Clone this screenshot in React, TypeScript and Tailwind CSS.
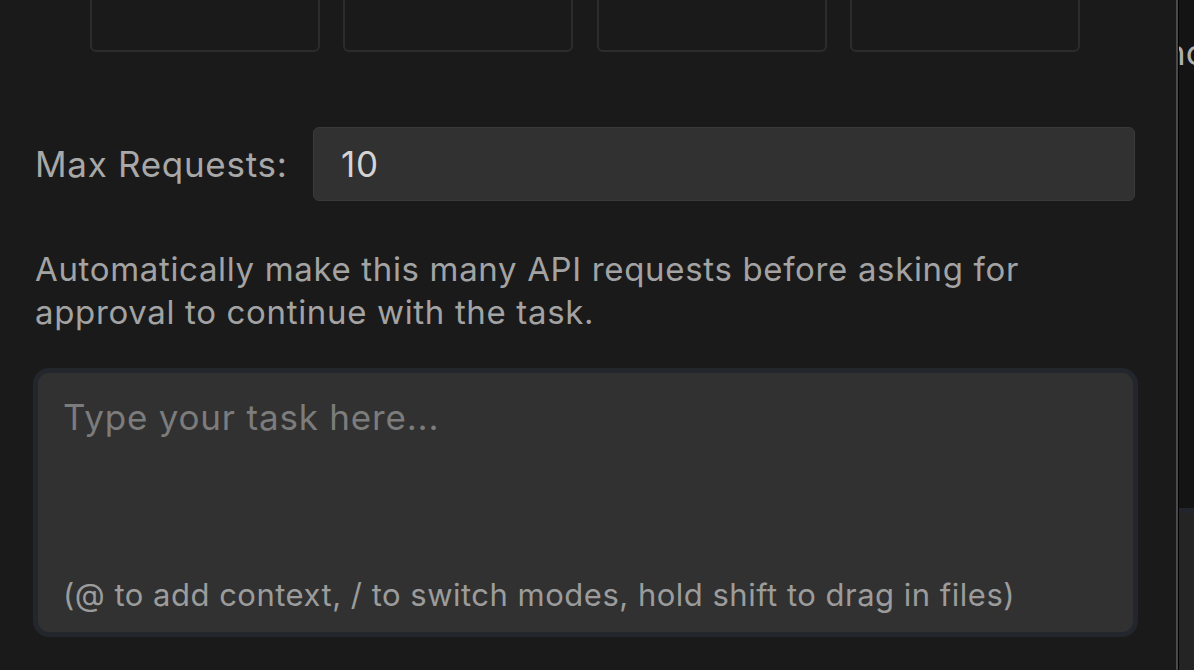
import React from 'react';

const font = { fontFamily: 'Inter, "Noto Sans", sans-serif' };

function ModeCard() {
  return <div className="h-[62px] w-[230px] rounded-md border-2 border-[#2c2c2c] bg-[#1a1a1a]" />;
}

export default function App() {
  return (
    <div className="flex h-[670px] w-[1194px] overflow-hidden bg-[#1a1a1a]" style={font}>
      {/* main panel */}
      <div className="flex w-[1176px] shrink-0 flex-col">
        <div className="-mt-[10px] flex gap-[23.3px] pl-[90px]">
          <ModeCard />
          <ModeCard />
          <ModeCard />
          <ModeCard />
        </div>

        <div className="mt-[75px] flex items-center pl-[35px] pr-[41px]">
          <span className="w-[278px] shrink-0 text-[35px] tracking-[0.02em] text-[#a8a8a8]">Max Requests:</span>
          <div className="flex h-[74px] flex-1 items-center rounded-md border border-[#3a3a3a] bg-[#313131] pl-[27px] text-[35px] tracking-[0.02em] text-[#d4d4d4]">
            10
          </div>
        </div>

        <p className="mt-[47px] pl-[35px] pr-[120px] text-[33px] leading-[43px] tracking-[0.02em] text-[#a3a3a3]">
          Automatically make this many API requests before asking for approval to continue with the task.
        </p>

        <div className="ml-[33px] mr-[38px] mt-[34px] flex h-[269px] flex-col justify-between rounded-2xl border-[5px] border-[#23262c] bg-[#313131] px-[25px] pb-[14px] pt-[18px]">
          <span className="text-[35px] tracking-[0.023em] text-[#7c7c7c]">Type your task here...</span>
          <span className="text-[31px] tracking-[0.016em] text-[#9c9c9c]">(@ to add context, / to switch modes, hold shift to drag in files)</span>
        </div>
      </div>

      {/* divider */}
      <div className="w-[2px] shrink-0 bg-[#4a4a4a]" />
      <div className="w-px shrink-0 bg-black" />

      {/* side panel */}
      <div className="flex flex-1 flex-col overflow-hidden bg-[#141414]">
        <div className="mt-[26px] -ml-[14px] whitespace-nowrap text-[35px] text-[#b0b0b0]">nc</div>
        <div className="mt-[429px] h-[5px] bg-[#22252c]" />
        <div className="flex-1 bg-[#242424]" />
      </div>
    </div>
  );
}
